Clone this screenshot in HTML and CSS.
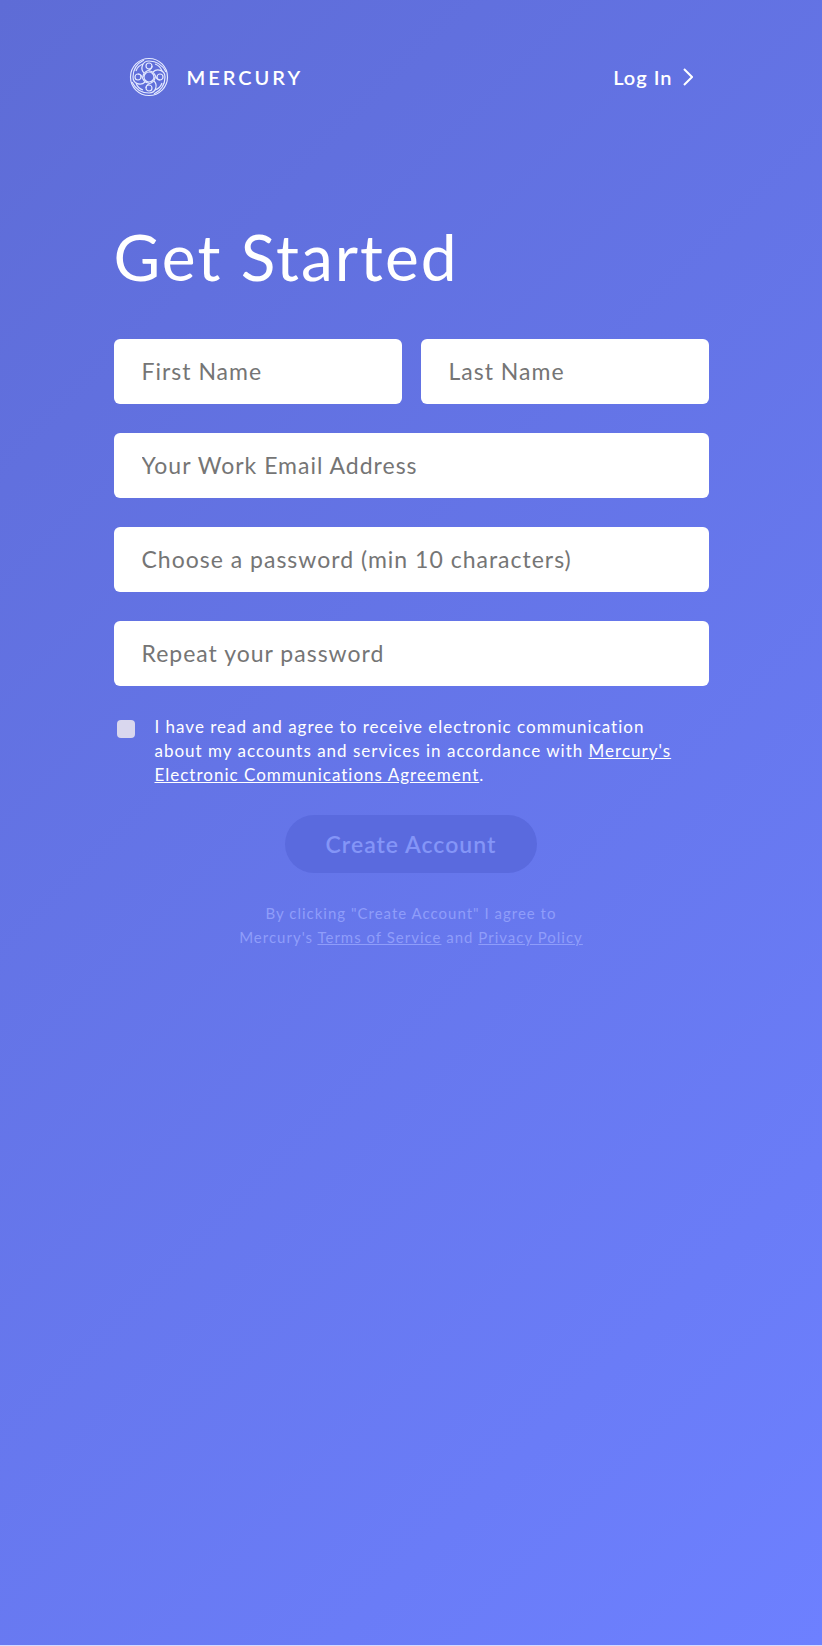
FILE: index.html
```html
<!DOCTYPE html>
<html lang="en">
<head>
    <meta charset="UTF-8">
    <meta name="viewport" content="width=device-width, initial-scale=1.0">
    <title>Mercury - Get Started</title>
    <link rel="stylesheet" href="styles.css">
</head>
<body>

    <header class="header">
        <a class="brand" href="#">
            <svg class="brand-logo" viewBox="-20 -20 40 40" aria-hidden="true">
                <defs>
                    <g id="knot">
                        <circle cx="0" cy="-11" r="3"/>
                        <path d="M-5 -4C-9 -8 -7 -16 0 -16C8 -16 14 -11 17 -5"/>
                        <path d="M3 -11C3 -8 1 -7 -2 -6C-4 -5 -6 -3 -6 0"/>
                        <path d="M6 -13C9 -12 12 -9 13 -6"/>
                    </g>
                </defs>
                <circle r="18.5"/>
                <circle r="5"/>
                <use href="#knot"/>
                <use href="#knot" transform="rotate(90)"/>
                <use href="#knot" transform="rotate(180)"/>
                <use href="#knot" transform="rotate(270)"/>
            </svg>
            <span class="brand-name">MERCURY</span>
        </a>
        <a class="login" href="#">
            Log In
            <svg class="login-arrow" viewBox="0 0 10 18" aria-hidden="true"><path d="M1 1l8 8-8 8"/></svg>
        </a>
    </header>

    <main class="signup">
        <h1>Get Started</h1>
        <form>
            <div class="fields">
                <input type="text" placeholder="First Name" aria-label="First Name">
                <input type="text" placeholder="Last Name" aria-label="Last Name">
                <input class="wide" type="email" placeholder="Your Work Email Address" aria-label="Your Work Email Address">
                <input class="wide" type="password" placeholder="Choose a password (min 10 characters)" aria-label="Choose a password">
                <input class="wide" type="password" placeholder="Repeat your password" aria-label="Repeat your password">
            </div>

            <div class="consent">
                <input type="checkbox" id="consent">
                <label for="consent">I have read and agree to receive electronic communication about my accounts and services in accordance with <a href="#">Mercury's Electronic Communications Agreement</a>.</label>
            </div>

            <div class="submit">
                <button type="submit" disabled>Create Account</button>
                <p class="terms">By clicking "Create Account" I agree to<br>Mercury's <a href="#">Terms of Service</a> and <a href="#">Privacy Policy</a></p>
            </div>
        </form>
    </main>

</body>
</html>
```
FILE: styles.css
```css
* {
    box-sizing: border-box;
}

body {
    margin: 0;
    min-height: 100vh;
    padding: 57px 24px;
    border-bottom: 1px solid #d5dcff;
    font-family: Lato, "Liberation Sans", sans-serif;
    letter-spacing: 1px;
    color: #fff;
    background: linear-gradient(135deg, #5e6cd6 0%, #6d80ff 100%);
}

a {
    color: inherit;
}

.header,
.signup {
    max-width: 595px;
    margin: 0 auto;
}

.header {
    display: flex;
    justify-content: space-between;
    align-items: center;
    padding: 0 16px 0 15px;
}

.brand,
.login {
    display: flex;
    align-items: center;
    text-decoration: none;
    font-weight: 600;
    font-size: 20px;
}

.brand {
    gap: 18px;
}

.brand-logo {
    width: 40px;
    height: 40px;
    fill: none;
    stroke: #e4e9ff;
    stroke-width: 1.2;
}

.brand-name {
    letter-spacing: 3px;
}

.login {
    gap: 10px;
}

.login-arrow {
    width: 10px;
    height: 18px;
    fill: none;
    stroke: #fff;
    stroke-width: 2;
}

h1 {
    margin: 118px 0 40px;
    font-size: 64px;
    font-weight: normal;
    line-height: 84px;
    letter-spacing: 2px;
}

.fields {
    display: grid;
    grid-template-columns: 1fr 1fr;
    gap: 29px 19px;
}

.fields input {
    width: 100%;
    height: 65px;
    padding: 0 28px 1px;
    border: 0;
    border-radius: 6px;
    background: #fff;
    font: inherit;
    font-size: 23px;
    letter-spacing: inherit;
}

.fields input::placeholder {
    color: #757575;
}

.fields .wide {
    grid-column: span 2;
}

.consent {
    display: flex;
    align-items: flex-start;
    gap: 20px;
    margin-top: 29px;
    padding: 0 24px 0 3px;
    font-size: 17px;
    line-height: 24px;
}

.consent input {
    appearance: none;
    flex: none;
    width: 18px;
    height: 18px;
    margin: 5px 0 0;
    border-radius: 4px;
    background: #d9d7ee;
}

.consent input:checked {
    background: #5461c8;
}

.submit {
    text-align: center;
    margin-top: 28px;
}

button {
    height: 58px;
    padding: 0 41px;
    border: 0;
    border-radius: 29px;
    background: #5a6ade;
    color: #8495f7;
    font: inherit;
    font-size: 23px;
    font-weight: 600;
    letter-spacing: inherit;
}

.terms {
    margin: 28px 0 0;
    font-size: 15px;
    line-height: 24px;
    color: #8f9dfa;
}
```
